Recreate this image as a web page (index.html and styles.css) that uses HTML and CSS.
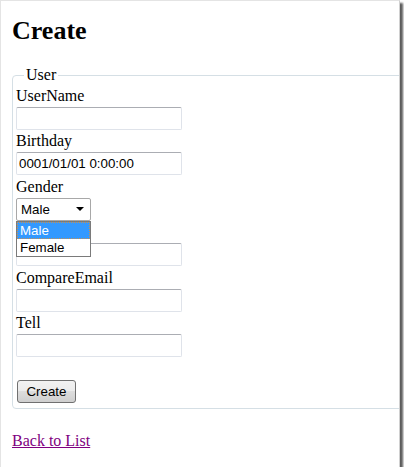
FILE: index.html
```html
<!DOCTYPE html>
<html>
<head>
    <title>Create</title>
    <meta name="viewport" content="width=device-width, initial-scale=1">
    <link rel="stylesheet" href="styles.css">
</head>

<body>
    <div class="screen">
        <h1>Create</h1>
        <form id="form">
            <fieldset class="user-set">
                <legend>User</legend>

                <div class="editor-label">UserName</div>
                <input type="text" class="text-box">

                <div class="editor-label">Birthday</div>
                <input type="text" class="text-box" value="0001/01/01 0:00:00">

                <div class="editor-label">Gender</div>
                <div class="select-wrap">
                    <div class="select-box">Male<span class="arrow"></span></div>
                    <ul class="select-list">
                        <li class="active">Male</li>
                        <li>Female</li>
                    </ul>
                </div>

                <!-- covered by the open gender list -->
                <div class="editor-label covered">Email</div>
                <input type="text" class="text-box">

                <div class="editor-label">CompareEmail</div>
                <input type="text" class="text-box">

                <div class="editor-label">Tell</div>
                <input type="text" class="text-box">

                <p class="submit-row">
                    <button type="submit" class="create-btn">Create</button>
                </p>
            </fieldset>
        </form>
        <p class="back-link"><a href="#">Back to List</a></p>
    </div>
</body>
</html>
```

FILE: styles.css
```css
body {
    margin: 0;
    padding: 0;
    background-color: #fff;
    font-family: "Liberation Serif", "Times New Roman", serif;
    font-size: 16px;
    color: #000;
}

.screen {
    width: 400px;
    height: 467px;
    box-sizing: border-box;
    padding-left: 11px;
    border-top: 1px solid #e4e4e4;
    border-left: 1px solid #e4e4e4;
    border-right: 1px solid #d0d0d0;
    background-color: #fff;
    overflow: hidden;
    box-shadow: 3px 3px 2px #5c5c5c;
}

h1 {
    margin: 15px 0 0;
    font-size: 26px;
    line-height: 30px;
    font-weight: bold;
}

.user-set {
    width: 420px;
    margin: 20px 0 0;
    padding: 3px 3px 5px;
    border: 1px solid #d5dfe5;
    border-radius: 4px;
}

.user-set legend {
    margin-left: 8px;
    padding: 0 2px;
    line-height: 18px;
}

.editor-label {
    line-height: 18px;
}

.covered {
    visibility: hidden;
}

.text-box {
    display: block;
    width: 166px;
    height: 23px;
    box-sizing: border-box;
    margin: 2px 0 2.4px;
    padding: 0 2px;
    border: 1px solid #dfe3ea;
    border-top-color: #abadb3;
    border-radius: 2px;
    font-family: "Liberation Sans", Arial, sans-serif;
    font-size: 13.33px;
    color: #000;
    background-color: #fff;
}

.select-wrap {
    position: relative;
    width: 75px;
    margin: 2px 0 2.4px;
}

.select-box {
    display: flex;
    align-items: center;
    height: 23px;
    box-sizing: border-box;
    padding: 0 6px 0 4px;
    border: 1px solid #a8a8a8;
    border-radius: 2px;
    font-family: "Liberation Sans", Arial, sans-serif;
    font-size: 13.33px;
    background-color: #fff;
}

.arrow {
    margin-left: auto;
    width: 0;
    height: 0;
    border-left: 4px solid transparent;
    border-right: 4px solid transparent;
    border-top: 4px solid #000;
}

.select-list {
    position: absolute;
    top: 100%;
    left: 0;
    width: 75px;
    box-sizing: border-box;
    margin: 0;
    padding: 0;
    list-style: none;
    border: 1px solid #7a7a7a;
    background-color: #fff;
    font-family: "Liberation Sans", Arial, sans-serif;
    font-size: 13.33px;
    z-index: 2;
}

.select-list li {
    height: 17px;
    line-height: 17px;
    padding-left: 3px;
}

.select-list .active {
    background-color: #3399ff;
    color: #fff;
    outline: 1px dotted #c89050;
    outline-offset: -1px;
}

.submit-row {
    margin: 22.6px 0 0;
}

.create-btn {
    display: block;
    width: 59px;
    height: 23px;
    margin-left: 1px;
    padding: 0;
    border: 1px solid #707070;
    border-radius: 3px;
    background: linear-gradient(#f2f2f2 0%, #ebebeb 50%, #dddddd 50%, #cfcfcf 100%);
    font-family: "Liberation Sans", Arial, sans-serif;
    font-size: 13.33px;
    color: #000;
    cursor: pointer;
}

.back-link {
    margin: 23.5px 0 0;
    line-height: 18px;
}

.back-link a {
    color: #800080;
}
```
